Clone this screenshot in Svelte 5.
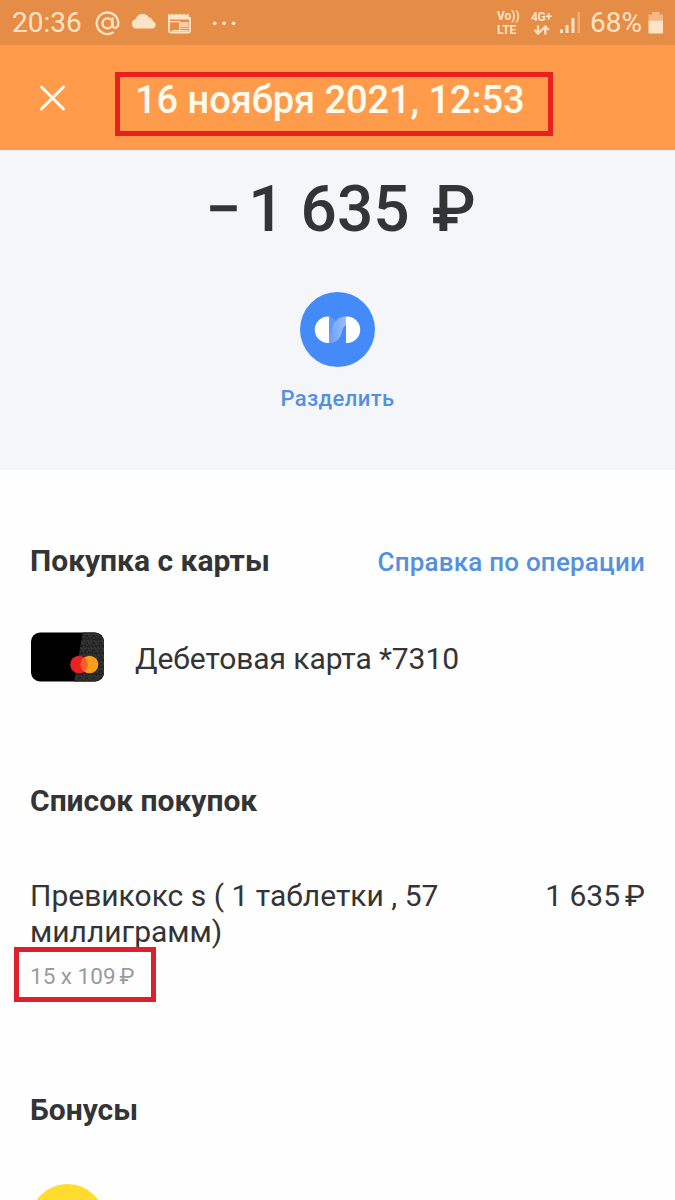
<script>
	let time = '20:36'
	let battery = '68%'
	let date = '16 ноября 2021, 12:53'

	let items = [
		{ name: 'Превикокс s ( 1 таблетки , 57 миллиграмм)', price: '1 635', qty: '15 x 109' }
	]
</script>

<div class="screen">
	<div class="status">
		<span class="clock">{time}</span>
		<svg class="status-left" width="150" height="30" viewBox="0 0 150 30">
			<g fill="none" stroke="#ffe3c6" stroke-width="2.3" stroke-linecap="round">
				<circle cx="17.5" cy="15.3" r="5" />
				<path d="M22.5 10.5v6.300c0 4.400 5.800 4 5.800-1.200A10.800 10.800 0 1 0 23 24.600" />
			</g>
			<path fill="#ffe3c6" d="M46 20.500a4.700 4.700 0 0 1-.600-9.200 7.600 7.600 0 0 1 13.500-2 5.500 5.500 0 0 1 4.200 4.200 3.600 3.600 0 0 1-.600 7z" />
			<path fill="none" stroke="#ffe3c6" stroke-width="1.900" d="M79 10h21v13a1.500 1.500 0 0 1-1.500 1.500h-18a1.500 1.500 0 0 1-1.500-1.500z" />
			<path fill="#ffe3c6" d="M78 5.600l2 1.500 2-1.500 2 1.500 2-1.500 2 1.500 2-1.500 2 1.500 2-1.500 2 1.500 2-1.500 1 1.500V11.500H78z" />
			<path fill="#ffe3c6" opacity=".75" d="M90 14h8.500v5H90z" />
			<path fill="none" stroke="#ffe3c6" stroke-width="1.100" d="M80 13.600h9.500M89.500 13v11.500M90 20.300h9M82 22.600h16" />
			<g fill="#ffe3c6">
				<circle cx="124.700" cy="15.300" r="1.900" />
				<circle cx="134" cy="15.300" r="1.900" />
				<circle cx="143.500" cy="15.300" r="1.900" />
			</g>
		</svg>
		<div class="status-right">
			<div class="volte"><span>Vo))</span><span>LTE</span></div>
			<div class="net">
				<span>4G+</span>
				<svg width="17" height="10" viewBox="0 0 17 10">
					<path fill="none" stroke="#ffe3c6" stroke-width="2.200" d="M5 .5v7.500M1.500 5 5 8.500 8.500 5M12.300 9.500V2M8.800 5l3.500-3.500L15.800 5" />
				</svg>
			</div>
			<svg class="signal" width="22" height="24" viewBox="0 0 22 24">
				<g fill="#ffe3c6">
					<rect x="0" y="17.500" width="3" height="3.500" />
					<rect x="5.500" y="13" width="3" height="8" />
					<rect x="11.500" y="6" width="3" height="15" />
					<rect x="17.500" y="0" width="2.500" height="21" opacity=".4" />
				</g>
			</svg>
			<span class="percent">{battery}</span>
			<svg class="battery" width="16" height="24" viewBox="0 0 16 24">
				<path fill="#ffe3c6" opacity=".5" d="M4 1h7.500v2.500h3.500v6H.500v-6H4z" />
				<path fill="#ffe3c6" d="M.500 9.500h14.500v12a1 1 0 0 1-1 1H1.500a1 1 0 0 1-1-1z" />
			</svg>
		</div>
	</div>

	<header>
		<svg class="close" width="28" height="28" viewBox="0 0 28 28">
			<path fill="none" stroke="#fffbee" stroke-width="3" stroke-linecap="round" d="M3.500 3l22 22M25.500 3l-22 22" />
		</svg>
		<h1 class="marked">{date}</h1>
	</header>

	<section class="summary">
		<div class="amount"><span class="minus">−</span><span>1 635</span><span class="rub">₽</span></div>
		<svg class="split" width="75" height="75" viewBox="0.5 0.5 75 75">
			<defs>
				<linearGradient id="ribbon" x1="0" x2="1" y1="0" y2="0">
					<stop offset="0" stop-color="#fff" stop-opacity=".2" />
					<stop offset="1" stop-color="#fff" stop-opacity=".45" />
				</linearGradient>
			</defs>
			<circle cx="38" cy="38" r="37.500" fill="#448af8" />
			<path fill="#fff" d="M29.500 25v26.500h-1a13.250 13.250 0 0 1 0-26.500zM46.500 25v26.500h1a13.250 13.250 0 0 0 0-26.500z" />
			<path fill="url(#ribbon)" d="M46.500 25v9c-4 2-3.500 6-5.500 10.500-2 4.500-6 7-11.500 7v-9c4-2 3.500-6 5.500-10.500 2-4.500 6-7 11.500-7z" />
			<path fill="#fff" opacity=".15" d="M29.500 25c4 1 6.500 3.500 7.500 7-2 4-3 8-7.500 10.500z" />
		</svg>
		<span class="split-label">Разделить</span>
	</section>

	<section class="purchase">
		<div class="row">
			<h2>Покупка с карты</h2>
			<span class="link">Справка по операции</span>
		</div>
		<div class="card">
			<svg width="74" height="50" viewBox="0 0 74 50">
				<defs>
					<clipPath id="card-shape"><rect x="1" y=".5" width="73" height="49" rx="9" /></clipPath>
					<pattern id="card-pattern" width="7" height="7" patternUnits="userSpaceOnUse">
						<path fill="none" stroke="#414141" stroke-width=".9" d="M0 2h3v3h3M5 0v3h2M1 7V5" />
					</pattern>
				</defs>
				<g clip-path="url(#card-shape)">
					<rect width="74" height="50" fill="#000" />
					<path fill="#222" d="M53 0h21v50H44z" />
					<path fill="url(#card-pattern)" d="M53 0h21v50H44z" />
				</g>
				<circle cx="49" cy="32.500" r="8.800" fill="#ec2027" />
				<circle cx="59.500" cy="32.500" r="8.800" fill="#f89e1c" />
				<path fill="#f4601f" d="M54.250 25.500a8.800 8.800 0 0 1 0 14 8.800 8.800 0 0 1 0-14z" />
			</svg>
			<span class="card-name">Дебетовая карта *7310</span>
		</div>
	</section>

	<section class="list">
		<h2>Список покупок</h2>
		{#each items as item}
			<div class="item">
				<div class="item-info">
					<span class="item-name">{item.name}</span>
					<span class="qty">{item.qty}<span class="rub">₽</span></span>
				</div>
				<span class="price">{item.price}<span class="rub">₽</span></span>
			</div>
		{/each}
	</section>

	<section class="bonus">
		<h2>Бонусы</h2>
		<div class="coin"></div>
	</section>
</div>

<style>
	:global(body) {
		background: #fefefe;
	}

	.screen {
		width: 675px;
		height: 1200px;
		overflow: hidden;
		background: #fefefe;
		color: #333435;
		font-family: Roboto, sans-serif;
		white-space: nowrap;
	}

	h1, h2 {
		margin: 0;
	}

	.status {
		display: flex;
		align-items: center;
		box-sizing: border-box;
		height: 45px;
		padding: 0 11px 0 12px;
		background: #e58c46;
		color: #ffe3c6;
	}

	.clock, .percent {
		font-size: 28px;
		line-height: 47px;
	}

	.clock {
		width: 78px;
	}

	.status-right {
		display: flex;
		align-items: center;
		margin-left: auto;
	}

	.volte, .net {
		display: flex;
		flex-direction: column;
		font-weight: 700;
		font-size: 12px;
		line-height: 13px;
	}

	.volte {
		width: 34px;
		line-height: 14px;
	}

	.net {
		width: 29px;
		letter-spacing: -0.3px;
	}

	.net svg {
		margin: 1px 0 0 2px;
	}

	.signal {
		margin: 2px 8px 0 0;
	}

	.battery {
		margin-left: 6px;
	}

	header {
		display: flex;
		align-items: center;
		box-sizing: border-box;
		height: 105px;
		padding-left: 38px;
		background: #ff9b4a;
	}

	.close {
		margin-right: 49px;
	}

	.marked {
		box-sizing: border-box;
		width: 438px;
		height: 64px;
		margin-top: 13px;
		border: 5px solid #e8201f;
		padding-left: 15px;
		color: #fffbee;
		font-size: 38px;
		font-weight: 500;
		line-height: 47px;
		letter-spacing: -0.05px;
	}

	.summary {
		display: flex;
		flex-direction: column;
		align-items: center;
		box-sizing: border-box;
		height: 320px;
		padding-top: 20px;
		background: #f5f6f9;
	}

	.amount {
		display: flex;
		margin-left: 6px;
		font-size: 64px;
		font-weight: 500;
		line-height: 80px;
	}

	.minus {
		margin-right: 7px;
	}

	.amount .rub {
		margin-left: 22px;
	}

	.split {
		margin-top: 42px;
	}

	.split-label {
		margin-top: 17px;
		color: #5490de;
		font-size: 22px;
		font-weight: 500;
		line-height: 30px;
		letter-spacing: 0.4px;
	}

	.purchase, .list, .bonus {
		padding: 0 30px;
	}

	h2 {
		font-size: 30px;
		font-weight: 700;
		line-height: 40px;
	}

	.purchase {
		padding-top: 71px;
	}

	.row {
		display: flex;
		justify-content: space-between;
	}

	.link {
		color: #5490de;
		font-size: 26px;
		font-weight: 500;
		line-height: 43px;
		letter-spacing: 0.2px;
	}

	.card {
		display: flex;
		align-items: center;
		height: 50px;
		margin-top: 48px;
	}

	.card-name {
		margin-left: 31px;
		font-size: 30px;
		line-height: 50px;
		letter-spacing: -0.08px;
		padding-top: 4px;
	}

	.list {
		padding-top: 99px;
	}

	.item {
		display: flex;
		justify-content: space-between;
		margin-top: 57px;
		font-size: 30px;
		line-height: 36px;
	}

	.item-info {
		display: flex;
		flex-direction: column;
		width: 430px;
	}

	.item-name {
		white-space: normal;
	}

	.qty {
		position: relative;
		margin-top: 11px;
		color: #9a9b9f;
		font-size: 22.5px;
		line-height: 30px;
	}

	.qty::after {
		content: '';
		position: absolute;
		top: -14px;
		left: -16px;
		box-sizing: border-box;
		width: 142px;
		height: 55px;
		border: 5px solid #dd212c;
	}

	.price .rub {
		margin-left: 5px;
	}

	.qty .rub {
		margin-left: 4px;
	}

	.bonus {
		padding-top: 99px;
	}

	.coin {
		width: 75px;
		height: 75px;
		margin-top: 54px;
		border-radius: 50%;
		background: #ffdc2d;
	}
</style>
